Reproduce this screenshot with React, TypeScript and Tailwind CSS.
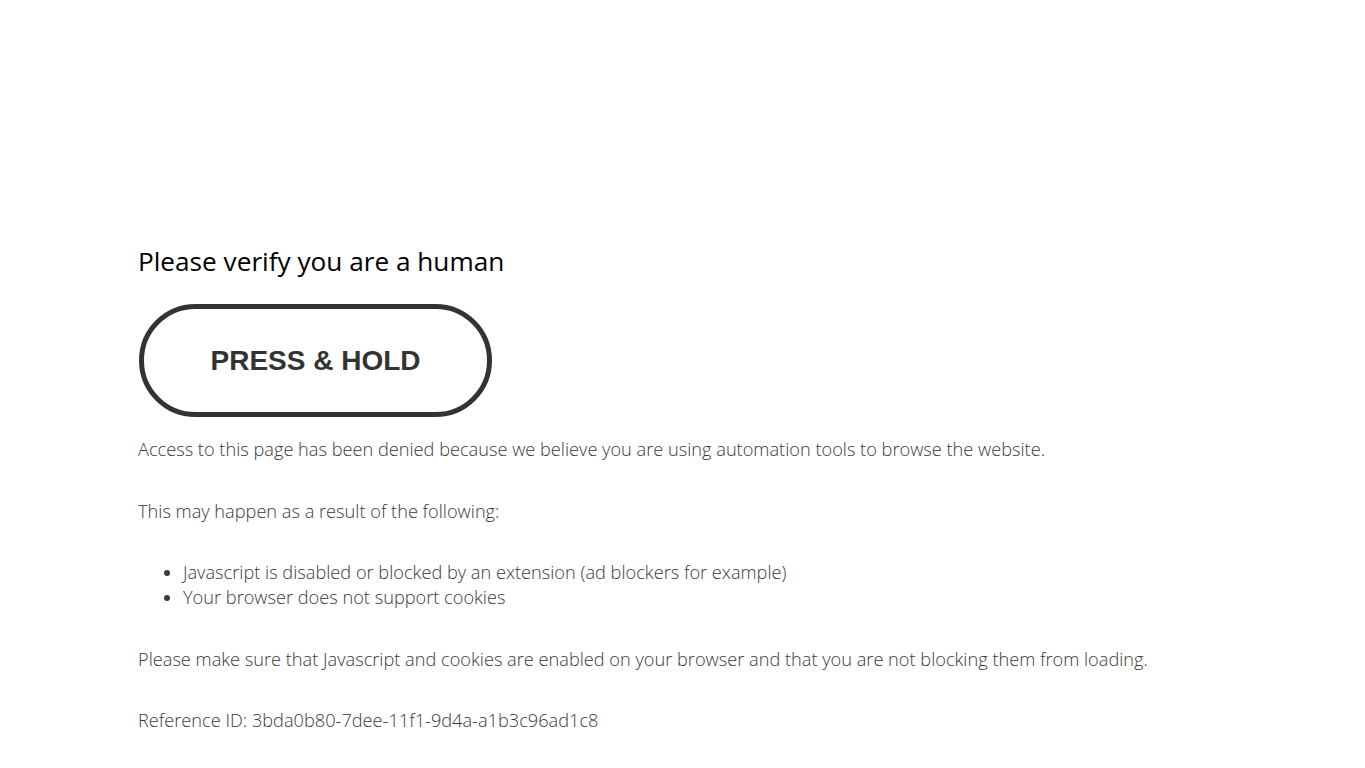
export default function App() {
  return (
    <div className="min-h-screen bg-white pl-[138px] pt-[243px] text-[#3a3a3a] font-['Open_Sans',sans-serif]">
      {/* heading */}
      <h1 className="text-[26.2px] leading-[36px] font-normal text-black">
        Please verify you are a human
      </h1>

      {/* hold button */}
      <div className="mt-[25px] ml-[1px] w-[353px] h-[113px] rounded-full border-[5px] border-[#333] flex items-center justify-center">
        <span className="font-['Liberation_Sans',Arial,sans-serif] font-bold text-[28px] text-[#333]">
          PRESS &amp; HOLD
        </span>
      </div>

      <div className="text-[18.2px] leading-[25px] font-light">
        <p className="mt-[20px]">
          Access to this page has been denied because we believe you are using automation tools to browse the website.
        </p>
        <p className="mt-[37px]">This may happen as a result of the following:</p>
        <ul className="mt-[36px] pl-[45px] list-disc">
          <li>Javascript is disabled or blocked by an extension (ad blockers for example)</li>
          <li>Your browser does not support cookies</li>
        </ul>
        <p className="mt-[37px]">
          Please make sure that Javascript and cookies are enabled on your browser and that you are not blocking them from loading.
        </p>
        <p className="mt-[36px]">Reference ID: 3bda0b80-7dee-11f1-9d4a-a1b3c96ad1c8</p>
      </div>
    </div>
  )
}
